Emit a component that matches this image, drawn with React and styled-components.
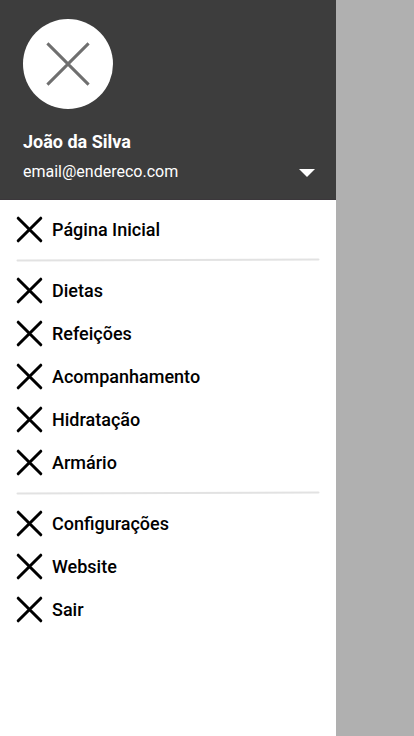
import React from "react";
import styled, { createGlobalStyle } from "styled-components";

const GlobalStyle = createGlobalStyle`
  * { box-sizing: border-box; }
  body { margin: 0; font-family: Roboto, sans-serif; }
`;

const Screen = styled.div`
  width: 414px;
  height: 736px;
  overflow: hidden;
  background: #b0b0b0;
`;

const Drawer = styled.aside`
  width: 336px;
  height: 100%;
  background: #fff;
`;

const Header = styled.header`
  height: 200px;
  padding: 19px 21px 0 23px;
  background: #3d3d3d;
  color: #fff;
  border-bottom: 1px solid #3b373b;
`;

const Avatar = styled.div`
  display: flex;
  align-items: center;
  justify-content: center;
  width: 90px;
  height: 90px;
  border-radius: 50%;
  background: #fff;
`;

const Name = styled.div`
  margin-top: 22px;
  font-size: 18px;
  font-weight: 700;
  line-height: 22px;
`;

const AccountRow = styled.div`
  display: flex;
  align-items: center;
  justify-content: space-between;
  margin-top: 9px;
  font-size: 16px;
  line-height: 20px;
`;

const Caret = styled.svg`
  display: block;
  margin-top: 1px;
`;

const Group = styled.nav`
  padding: 8px 16px;
`;

const Item = styled.a`
  display: flex;
  align-items: center;
  gap: 9px;
  height: 43px;
  color: #000;
  font-size: 18px;
  font-weight: 500;
`;

const Divider = styled.svg`
  display: block;
  margin: 0 16px;
  overflow: visible;
`;

const Cross = ({ size, color, inset, cap }) => (
  <svg width={size} height={size} viewBox={`0 0 ${size} ${size}`}>
    <path
      d={`M${inset} ${inset}L${size - inset} ${size - inset}M${size - inset} ${inset}L${inset} ${size - inset}`}
      stroke={color}
      strokeWidth={3}
      strokeLinecap={cap}
    />
  </svg>
);

const groups = [
  ["Página Inicial"],
  ["Dietas", "Refeições", "Acompanhamento", "Hidratação", "Armário"],
  ["Configurações", "Website", "Sair"],
];

export default function App() {
  return (
    <Screen>
      <GlobalStyle />
      <Drawer>
        <Header>
          <Avatar><Cross size={44} color="#6f6f6f" inset={1.4} cap="butt" /></Avatar>
          <Name>João da Silva</Name>
          <AccountRow>
            email@endereco.com
            <Caret width="16" height="8" viewBox="0 0 16 8"><path d="M0 0H16L8 8Z" fill="#fff" /></Caret>
          </AccountRow>
        </Header>
        {groups.map((items, index) => (
          <React.Fragment key={items[0]}>
            {index > 0 && (
              <Divider width="304" height="2" viewBox="0 0 304 2">
                <path d="M1.5 1.5L302.5 .5" stroke="#e2e2e2" strokeWidth="2" strokeLinecap="round" />
              </Divider>
            )}
            <Group>
              {items.map((label) => (
                <Item key={label}><Cross size={27} color="#000" inset={2.2} cap="round" />{label}</Item>
              ))}
            </Group>
          </React.Fragment>
        ))}
      </Drawer>
    </Screen>
  );
}
